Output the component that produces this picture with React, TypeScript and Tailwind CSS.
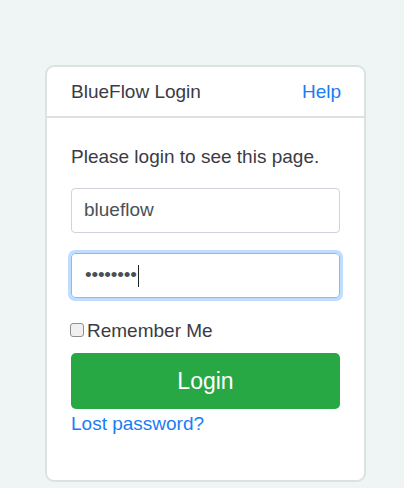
import React from 'react';

export default function App() {
  return (
    <div className="min-h-[488px] w-full bg-[#eff4f4] pt-[65px] pl-[45px]" style={{ fontFamily: '"Liberation Sans", Arial, sans-serif' }}>
      <div className="w-[321px] h-[417px] bg-white border-2 border-[#dce1e1] rounded-[9px] flex flex-col">
        {/* Header */}
        <div className="h-[51px] pl-[24px] pr-[23px] pt-[2px] flex items-center justify-between border-b-2 border-[#dce1e1]">
          <span className="text-[19px] text-[#3b3b45]">BlueFlow Login</span>
          <a className="text-[19px] text-[#1a7cf5]">Help</a>
        </div>

        {/* Body */}
        <div className="px-[24px] pt-[28px] flex flex-col">
          <p className="text-[19px] text-[#3b3b45] leading-[22px]">Please login to see this page.</p>

          <div className="mt-[20px] h-[45px] rounded-[4px] border border-[#ced4da] flex items-center px-[12px] text-[19px] text-[#495057]">
            blueflow
          </div>

          <div className="mt-[20px] h-[45px] rounded-[4px] border border-[#80bdff] shadow-[0_0_0_3px_rgba(0,123,255,0.25)] flex items-center pl-[13px]">
            <span className="text-[19px] tracking-[-0.2px] text-[#495057]">••••••••</span>
            <span className="ml-[1px] w-px h-[22px] bg-[#222]" />
          </div>

          <label className="mt-[21px] flex items-center text-[19px] text-[#3b3b45] leading-[24px]">
            <span className="w-[14px] h-[14px] rounded-[3px] border border-[#8f8f8f] bg-[#f0f0f0] mr-[3px] mt-[-3px] ml-[-1px]" />
            Remember Me
          </label>

          <button className="mt-[10px] h-[56px] rounded-[5px] bg-[#28a745] text-white text-[23px] flex items-center justify-center">
            Login
          </button>

          <a className="mt-[3px] text-[19px] text-[#1a7cf5] leading-[24px]">Lost password?</a>
        </div>
      </div>
    </div>
  );
}
